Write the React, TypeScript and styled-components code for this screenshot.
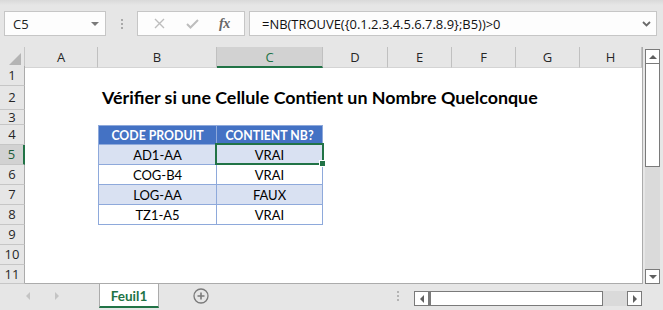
import React from 'react';
import styled, { createGlobalStyle } from 'styled-components';

const Global = createGlobalStyle`
  html, body { margin: 0; padding: 0; background: #e6e6e6; }
  body { width: 663px; height: 310px; overflow: hidden; }
`;

const COLS = '25px 73px 119px 106px 65px 64px 64px 64px 62px';
const GREEN = '#217346';
const UI_FONT = '"Open Sans", "Noto Sans", sans-serif';
const CELL_FONT = 'Lato, "Open Sans", sans-serif';

const Window = styled.div`
  width: 663px;
  height: 310px;
  display: flex;
  flex-direction: column;
  background: #e6e6e6;
  font-family: ${UI_FONT};
  overflow: hidden;
`;

/* ---------- formula bar ---------- */
const FormulaRow = styled.div`
  height: 47px;
  flex: none;
  box-sizing: border-box;
  padding: 11px 0 0 4px;
  display: flex;
  align-items: flex-start;
  background: linear-gradient(#d9d9d9 0, #e6e6e6 5px);
`;

const Box = styled.div`
  height: 25px;
  box-sizing: border-box;
  border: 1px solid #c6c6c6;
  background: #fdfdfd;
  display: flex;
  align-items: center;
`;

const NameBox = styled(Box)`
  width: 102px;
  justify-content: space-between;
  padding: 0 6px 0 8px;
  font-size: 13px;
  color: #222;
`;

const Grip = styled.div`
  width: 31px;
  height: 25px;
  display: flex;
  flex-direction: column;
  align-items: center;
  justify-content: center;
  gap: 2px;
  span {
    width: 2px;
    height: 2px;
    background: #a9a9a9;
  }
`;

const FxGroup = styled(Box)`
  width: 108px;
  justify-content: space-around;
  padding: 0 4px 0 6px;
`;

const FxLabel = styled.span`
  font-family: "Liberation Serif", serif;
  font-style: italic;
  font-weight: bold;
  font-size: 14px;
  color: #666;
  letter-spacing: -0.5px;
`;

const FormulaInput = styled(Box)`
  width: 408px;
  margin-left: 4px;
  justify-content: space-between;
  padding: 0 5px 0 12px;
  font-size: 12.95px;
  color: #111;
`;

/* ---------- grid ---------- */
const Main = styled.div`
  height: 237px;
  flex: none;
  display: flex;
`;

const Sheet = styled.div`
  width: 643px;
  box-sizing: border-box;
  display: flex;
  flex-direction: column;
  border-right: 1px solid #ababab;
  border-bottom: 1px solid #ababab;
  background: #fff;
`;

const SheetRow = styled.div<{ $h: number }>`
  display: grid;
  grid-template-columns: ${COLS};
  height: ${(p) => p.$h}px;
  flex: none;
`;

const Corner = styled.div`
  background: #e6e6e6;
  border-right: 1px solid #c6c6c6;
  display: flex;
  align-items: flex-end;
  justify-content: flex-end;
  padding: 0 3px 3px 0;
`;

const ColHeader = styled.div<{ $sel?: boolean }>`
  box-sizing: border-box;
  background: ${(p) => (p.$sel ? '#d2d2d2' : '#e6e6e6')};
  border-right: 1px solid #c0c0c0;
  border-bottom: ${(p) => (p.$sel ? `2px solid ${GREEN}` : '1px solid #d4d4d4')};
  color: ${(p) => (p.$sel ? GREEN : '#262626')};
  font-size: 13px;
  display: flex;
  align-items: center;
  justify-content: center;
  padding-top: ${(p) => (p.$sel ? 1 : 0)}px;
`;

const RowHeader = styled.div<{ $sel?: boolean }>`
  box-sizing: border-box;
  background: ${(p) => (p.$sel ? '#d2d2d2' : '#e6e6e6')};
  border-right: ${(p) => (p.$sel ? `2px solid ${GREEN}` : '1px solid #ababab')};
  border-bottom: 1px solid #c6c6c6;
  color: ${(p) => (p.$sel ? '#1e5c3a' : '#262626')};
  font-size: 13px;
  display: flex;
  align-items: center;
  justify-content: center;
  line-height: 13px;
`;

const Cell = styled.div`
  position: relative;
  min-width: 0;
`;

const TitleCell = styled(Cell)`
  display: flex;
  align-items: flex-end;
  padding: 0 0 3px 4px;
  white-space: nowrap;
  overflow: visible;
  font-family: ${CELL_FONT};
  font-weight: 700;
  font-size: 17.85px;
  color: #000;
  line-height: 20px;
  z-index: 1;
`;

type Tone = 'head' | 'band' | 'plain';

const TableCell = styled(Cell)<{ $tone: Tone; $first?: boolean; $top?: boolean }>`
  box-sizing: border-box;
  display: flex;
  align-items: center;
  justify-content: center;
  font-family: ${CELL_FONT};
  font-size: ${(p) => (p.$tone === 'head' ? 12.3 : 13)}px;
  font-weight: ${(p) => (p.$tone === 'head' ? 700 : 400)};
  color: ${(p) => (p.$tone === 'head' ? '#fff' : '#000')};
  background: ${(p) => (p.$tone === 'head' ? '#4472c4' : p.$tone === 'band' ? '#d9e1f2' : '#fff')};
  border-right: 1px solid #8ea9db;
  border-bottom: 1px solid #8ea9db;
  border-left: ${(p) => (p.$first ? '1px solid #8ea9db' : 'none')};
  border-top: ${(p) => (p.$top ? '1px solid #8ea9db' : 'none')};
`;

const Selection = styled.div`
  position: absolute;
  left: -2px;
  top: -2px;
  right: -2px;
  bottom: -1px;
  border: 2px solid ${GREEN};
  pointer-events: none;
  z-index: 2;
`;

const FillHandle = styled.div`
  position: absolute;
  right: -4px;
  bottom: -4px;
  width: 5px;
  height: 5px;
  background: ${GREEN};
  border: 1px solid #fff;
`;

/* ---------- vertical scrollbar ---------- */
const VScroll = styled.div`
  width: 15px;
  margin: 2px 0 0 2px;
  display: flex;
  flex-direction: column;
  background: #dadada;
`;

const ScrollBtn = styled.div<{ $w?: number; $h?: number }>`
  box-sizing: border-box;
  width: ${(p) => (p.$w ? `${p.$w}px` : '100%')};
  height: ${(p) => (p.$h ? `${p.$h}px` : '100%')};
  flex: none;
  border: 1px solid #7a7a7a;
  background: #fff;
  display: flex;
  align-items: center;
  justify-content: center;
`;

const Track = styled.div`
  flex: 1;
  background: #dadada;
`;

const VThumb = styled.div`
  box-sizing: border-box;
  height: 103px;
  flex: none;
  border: 1px solid #7a7a7a;
  border-top: none;
  background: #fff;
`;

/* ---------- bottom bar ---------- */
const BottomBar = styled.div`
  height: 26px;
  flex: none;
  display: flex;
  align-items: flex-start;
  background: #e6e6e6;
`;

const NavArrows = styled.div`
  width: 99px;
  height: 24px;
  display: flex;
  align-items: center;
  padding-left: 26px;
  gap: 25px;
  box-sizing: border-box;
`;

const SheetTab = styled.div`
  width: 60px;
  height: 24px;
  box-sizing: border-box;
  background: #fff;
  border-left: 1px solid #ababab;
  border-right: 1px solid #ababab;
  border-bottom: 2px solid ${GREEN};
  color: ${GREEN};
  font-family: ${CELL_FONT};
  font-weight: 700;
  font-size: 13.5px;
  display: flex;
  align-items: center;
  justify-content: center;
  padding-top: 1px;
`;

const AddSheet = styled.div`
  width: 84px;
  height: 24px;
  display: flex;
  align-items: center;
  justify-content: center;
`;

const TabGrip = styled.div`
  margin-left: 147px;
  height: 24px;
  width: 16px;
  display: flex;
  flex-direction: column;
  align-items: center;
  justify-content: center;
  gap: 2px;
  span {
    width: 2px;
    height: 2px;
    background: #b4b4b4;
  }
`;

const HScroll = styled.div`
  margin: 7px 0 0 8px;
  width: 228px;
  height: 15px;
  display: flex;
  background: #dadada;
`;

const HThumb = styled.div`
  box-sizing: border-box;
  width: 174px;
  height: 15px;
  flex: none;
  border: 1px solid #7a7a7a;
  border-left: 2px solid #7a7a7a;
  background: #fff;
`;

/* ---------- small drawings ---------- */
const Tri = ({ dir, color = '#5f5f5f', size = 4 }: { dir: 'up' | 'down' | 'left' | 'right'; color?: string; size?: number }) => {
  const s = size;
  const pts =
    dir === 'up'
      ? `0,${s} ${s},0 ${2 * s},${s}`
      : dir === 'down'
      ? `0,0 ${2 * s},0 ${s},${s}`
      : dir === 'left'
      ? `${s},0 ${s},${2 * s} 0,${s}`
      : `0,0 0,${2 * s} ${s},${s}`;
  const w = dir === 'up' || dir === 'down' ? 2 * s : s;
  const h = dir === 'up' || dir === 'down' ? s : 2 * s;
  return (
    <svg width={w} height={h} viewBox={`0 0 ${w} ${h}`}>
      <polygon points={pts} fill={color} />
    </svg>
  );
};

const rows: { h: number; n: number }[] = [
  { h: 20, n: 1 },
  { h: 24, n: 2 },
  { h: 15, n: 3 },
  { h: 20, n: 4 },
  { h: 20, n: 5 },
  { h: 20, n: 6 },
  { h: 20, n: 7 },
  { h: 20, n: 8 },
  { h: 20, n: 9 },
  { h: 20, n: 10 },
  { h: 19, n: 11 },
];

const table: Record<number, [string, string, Tone]> = {
  4: ['CODE PRODUIT', 'CONTIENT NB?', 'head'],
  5: ['AD1-AA', 'VRAI', 'band'],
  6: ['COG-B4', 'VRAI', 'plain'],
  7: ['LOG-AA', 'FAUX', 'band'],
  8: ['TZ1-A5', 'VRAI', 'plain'],
};

const letters = ['A', 'B', 'C', 'D', 'E', 'F', 'G', 'H'];

export default function App() {
  return (
    <Window>
      <Global />
      <FormulaRow>
        <NameBox>
          <span>C5</span>
          <Tri dir="down" color="#7a7a7a" size={4} />
        </NameBox>
        <Grip>
          <span />
          <span />
          <span />
        </Grip>
        <FxGroup>
          <svg width="11" height="11" viewBox="0 0 11 11">
            <path d="M1 1 L10 10 M10 1 L1 10" stroke="#bdbdbd" strokeWidth="1.4" />
          </svg>
          <svg width="13" height="10" viewBox="0 0 13 10">
            <path d="M1 5 L4.5 8.5 L12 1" stroke="#bdbdbd" strokeWidth="2" fill="none" />
          </svg>
          <FxLabel>fx</FxLabel>
        </FxGroup>
        <FormulaInput>
          <span>=NB(TROUVE({'{'}0.1.2.3.4.5.6.7.8.9{'}'};B5))&gt;0</span>
          <svg width="9" height="6" viewBox="0 0 9 6">
            <path d="M1 1 L4.5 4.5 L8 1" stroke="#6a6a6a" strokeWidth="1.8" fill="none" />
          </svg>
        </FormulaInput>
      </FormulaRow>

      <Main>
        <Sheet>
          <SheetRow $h={19}>
            <Corner>
              <svg width="12" height="12" viewBox="0 0 12 12">
                <polygon points="12,0 12,12 0,12" fill="#b4b4b4" />
              </svg>
            </Corner>
            {letters.map((l) => (
              <ColHeader key={l} $sel={l === 'C'}>
                {l}
              </ColHeader>
            ))}
          </SheetRow>
          {rows.map((r) => {
            const t = table[r.n];
            return (
              <SheetRow key={r.n} $h={r.h}>
                <RowHeader $sel={r.n === 5}>{r.n}</RowHeader>
                <Cell />
                {r.n === 2 ? (
                  <TitleCell>Vérifier si une Cellule Contient un Nombre Quelconque</TitleCell>
                ) : t ? (
                  <TableCell $tone={t[2]} $first $top={r.n === 4}>
                    {t[0]}
                  </TableCell>
                ) : (
                  <Cell />
                )}
                {t ? (
                  <TableCell $tone={t[2]} $top={r.n === 4}>
                    {t[1]}
                    {r.n === 5 && (
                      <Selection>
                        <FillHandle />
                      </Selection>
                    )}
                  </TableCell>
                ) : (
                  <Cell />
                )}
                <Cell />
                <Cell />
                <Cell />
                <Cell />
                <Cell />
              </SheetRow>
            );
          })}
        </Sheet>
        <VScroll>
          <ScrollBtn $h={15}>
            <Tri dir="up" size={4} />
          </ScrollBtn>
          <VThumb />
          <Track />
          <ScrollBtn $h={15}>
            <Tri dir="down" size={4} />
          </ScrollBtn>
        </VScroll>
      </Main>

      <BottomBar>
        <NavArrows>
          <Tri dir="left" color="#c4c4c4" size={4} />
          <Tri dir="right" color="#c4c4c4" size={4} />
        </NavArrows>
        <SheetTab>Feuil1</SheetTab>
        <AddSheet>
          <svg width="16" height="16" viewBox="0 0 16 16">
            <circle cx="8" cy="8" r="7" stroke="#7a7a7a" strokeWidth="1.3" fill="none" />
            <path d="M8 4.5 V11.5 M4.5 8 H11.5" stroke="#7a7a7a" strokeWidth="1.6" />
          </svg>
        </AddSheet>
        <TabGrip>
          <span />
          <span />
          <span />
        </TabGrip>
        <HScroll>
          <ScrollBtn $w={15}>
            <Tri dir="left" size={4} />
          </ScrollBtn>
          <HThumb />
          <Track />
          <ScrollBtn $w={15}>
            <Tri dir="right" size={4} />
          </ScrollBtn>
        </HScroll>
      </BottomBar>
    </Window>
  );
}
